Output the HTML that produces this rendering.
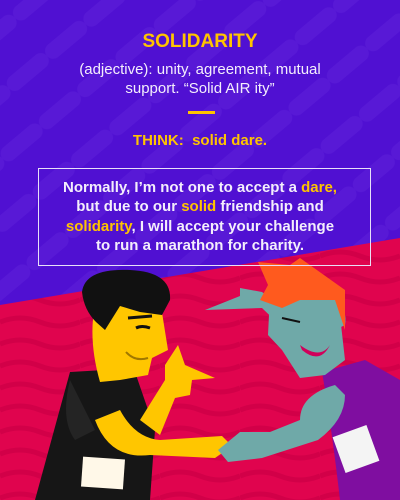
<!DOCTYPE html>
<html><head><style>
html,body{margin:0;padding:0}
body{width:400px;height:500px;overflow:hidden;position:relative;font-family:"Liberation Sans",sans-serif;background:#5010d2}
svg.bg{position:absolute;left:0;top:0}
.t{position:absolute;left:0;width:400px;text-align:center;color:#f4eefc;font-weight:bold}
.y{color:#ffc400}
</style></head><body>
<svg class="bg" width="400" height="500" viewBox="0 0 400 500">
<defs>
<pattern id="p" width="50" height="50" patternUnits="userSpaceOnUse" patternTransform="rotate(-40)">
<rect width="50" height="50" fill="#5010d2"/>
<rect x="0" y="15" width="50" height="16" rx="8" fill="#5819d6"/>
</pattern>
<pattern id="w" width="80" height="22" patternUnits="userSpaceOnUse">
<rect width="80" height="22" fill="#e0044e"/>
<path d="M0 14 Q20 6 40 14 T80 14" stroke="#d20048" stroke-width="5" fill="none"/>
</pattern>
</defs>
<rect width="400" height="500" fill="url(#p)"/>
<polygon points="0,305 400,238 400,500 0,500" fill="url(#w)"/>
<!-- left man body -->
<path d="M70 372 L35 500 L150 500 L155 430 L135 372 L105 370 Z" fill="#161616"/>
<path d="M70 380 Q60 420 75 440 L95 430 Z" fill="#242424"/>
<!-- left lower arm -->
<path d="M95 420 Q110 460 150 455 L215 458 L232 446 L222 436 L160 440 Q135 438 120 410Z" fill="#ffc600"/>
<!-- left pointing arm -->
<path d="M140 420 L165 380 L165 365 L178 345 L185 365 L215 378 L192 380 L190 395 L175 398 L160 435 Z" fill="#ffc600"/>
<!-- left head -->
<path d="M95 305 L160 300 L168 350 L152 358 L148 375 L120 380 L100 382 Q88 340 95 305Z" fill="#ffc600"/>
<path d="M82 292 Q85 268 130 270 Q172 272 170 300 L162 315 L140 312 L120 306 L105 330 L96 322 Q84 310 82 292Z" fill="#111"/>
<path d="M128 318 L152 316" stroke="#111" stroke-width="3" fill="none"/>
<path d="M136 328 Q142 325 150 328" stroke="#111" stroke-width="3" fill="none"/>
<path d="M126 352 Q135 362 148 358" stroke="#a07800" stroke-width="2" fill="none"/>
<rect x="82" y="458" width="42" height="30" fill="#fff8e8" transform="rotate(4 103 473)"/>
<!-- right man body -->
<path d="M322 372 L365 360 L400 380 L400 500 L340 500 Q332 430 322 372Z" fill="#7f0ea0"/>
<!-- right lower arm -->
<path d="M335 385 Q300 395 300 420 L270 432 L240 432 L218 450 L228 462 L262 458 L318 440 Q345 420 345 395Z" fill="#6fa9a8"/>
<!-- right raised arm -->
<path d="M290 335 L262 308 L205 310 L240 296 L240 288 L262 292 L305 325 Z" fill="#6fa9a8"/>
<!-- right head -->
<path d="M270 295 L338 298 L345 360 L325 375 L300 378 L282 350 L268 335 Z" fill="#6fa9a8"/>
<path d="M332 312 Q348 305 345 325 L335 330Z" fill="#6fa9a8"/>
<path d="M258 262 L290 265 L300 258 L345 290 L345 330 L335 300 L300 300 L282 308 L260 300 L268 285Z" fill="#ff5a1e"/>
<path d="M282 318 L300 322" stroke="#111" stroke-width="2"/>
<path d="M300 345 Q320 360 330 345 Q320 365 302 350Z" fill="#d0005a"/>
<rect x="338" y="430" width="36" height="38" fill="#f4f4f4" transform="rotate(-20 356 449)"/>
</svg>
<div class="t y" style="top:31px;font-size:19px">SOLIDARITY</div>
<div class="t" style="top:60px;font-size:15px;line-height:19px;font-weight:normal">(adjective): unity, agreement, mutual<br>support. “Solid AIR ity”</div>
<div style="position:absolute;left:188px;top:111px;width:27px;height:3px;background:#ffc400"></div>
<div class="t y" style="top:132px;font-size:15px">THINK:&nbsp; solid dare.</div>
<div style="position:absolute;left:38px;top:168px;width:331px;height:96px;border:1.5px solid #e8e0f8"></div>
<div class="t" style="top:178px;font-size:15px;line-height:19.3px">Normally, I’m not one to accept a <span class="y">dare,</span><br>but due to our <span class="y">solid</span> friendship and<br><span class="y">solidarity</span>, I will accept your challenge<br>to run a marathon for charity.</div>
</body></html>
